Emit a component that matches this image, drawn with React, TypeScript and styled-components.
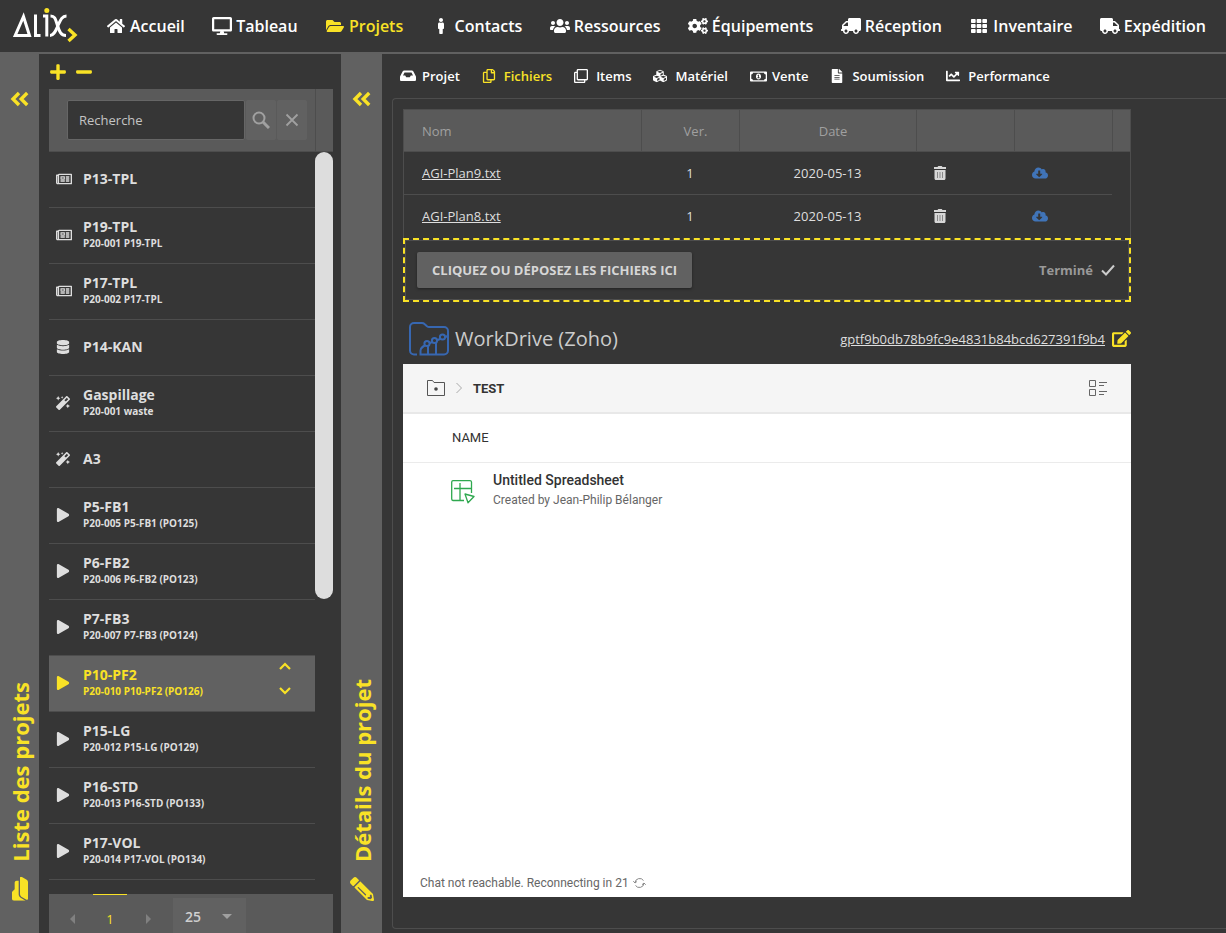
import React from 'react';
import styled, { createGlobalStyle, css } from 'styled-components';
import {
  FaHome, FaDesktop, FaFolderOpen, FaMale, FaUsers, FaCogs, FaTruck, FaTh, FaCubes, FaFileAlt,
  FaChartLine, FaRegCopy, FaRegClone, FaRegMoneyBillAlt, FaPlus, FaMinus, FaRegNewspaper,
  FaDatabase, FaMagic, FaPlay, FaCloudDownloadAlt, FaPencilAlt, FaEdit,
} from 'react-icons/fa';

const c = {
  bg: '#363636',
  bar: '#616161',
  head: '#5a5a5a',
  line: '#4d4d4d',
  text: '#dedede',
  muted: '#a0a0a0',
  accent: '#f9e226',
  blue: '#4074b8',
};

const GlobalStyle = createGlobalStyle`
  * { box-sizing: border-box; }
  html, body, #root { height: 100%; }
  body {
    margin: 0;
    background: ${c.bg};
    color: ${c.text};
    font-family: "Open Sans", "Noto Sans", sans-serif;
    font-size: 13px;
    overflow: hidden;
  }
  button, input, select { font: inherit; color: inherit; }
  button { background: none; border: 0; padding: 0; cursor: pointer; }
  a { color: inherit; }
  svg { display: block; flex: none; }
`;

const Shell = styled.div`
  display: flex;
  flex-direction: column;
  height: 100vh;
`;

const Header = styled.header`
  display: flex;
  align-items: center;
  height: 54px;
  flex: none;
  padding: 0 20px 0 12px;
  border-bottom: 2px solid ${c.bar};
`;

const MainNav = styled.nav`
  flex: 1;
  display: flex;
  justify-content: space-between;
  margin-left: 26px;
`;

const NavLink = styled.a<{ $active?: boolean }>`
  display: flex;
  align-items: center;
  gap: 2px;
  color: ${p => (p.$active ? c.accent : '#fff')};
  font-size: 16px;
  font-weight: 600;
  line-height: 24px;
  text-decoration: none;
`;

const NavIcon = styled.span<{ $flip?: boolean }>`
  display: flex;
  justify-content: center;
  width: 24px;
  ${p => p.$flip && css`transform: scaleX(-1);`}
`;

const Body = styled.div`
  flex: 1;
  min-height: 0;
  display: flex;
`;

const Rail = styled.aside<{ $width: number }>`
  flex: none;
  width: ${p => p.$width}px;
  display: flex;
  flex-direction: column;
  align-items: center;
  justify-content: space-between;
  padding: 37px 0 32px;
  background: ${c.bar};
  color: ${c.accent};
`;

const RailTitle = styled.h2`
  display: flex;
  align-items: center;
  gap: 15px;
  margin: 0;
  font-size: 22px;
  font-weight: 700;
  line-height: 30px;
  writing-mode: vertical-rl;
  transform: rotate(180deg);
  svg { transform: rotate(90deg); }
`;

const ListPanel = styled.section`
  flex: none;
  width: 302px;
  display: flex;
  flex-direction: column;
  padding: 0 8px 0 10px;
`;

const ListActions = styled.div`
  flex: none;
  display: flex;
  align-items: center;
  gap: 8px;
  height: 35px;
  color: ${c.accent};
`;

const SearchBar = styled.form`
  flex: none;
  display: flex;
  gap: 1px;
  height: 63px;
  margin: 0;
  padding: 11px 0 0 18px;
  background: ${c.head};
  border-bottom: 1px solid ${c.line};
`;

const SearchInput = styled.input`
  width: 178px;
  height: 40px;
  padding: 0 11px;
  background: ${c.bg};
  border: 1px solid #666;
  border-radius: 2px;
  outline: 0;
  &::placeholder { color: #c4c4c4; opacity: 1; }
`;

const SearchButton = styled.button`
  display: flex;
  align-items: center;
  justify-content: center;
  width: 30px;
  height: 40px;
  background: ${c.bar};
  border-radius: 2px;
  color: ${c.muted};
`;

const SearchEnd = styled.span`
  width: 18px;
  height: 62px;
  margin: -11px 0 0 auto;
  border-left: 1px solid ${c.line};
`;

const ListArea = styled.div`
  flex: 1;
  min-height: 0;
  display: flex;
`;

const ProjectList = styled.ul`
  flex: 1;
  margin: 0;
  padding: 0;
  overflow: hidden;
  list-style: none;
`;

const Scroller = styled.div`
  width: 18px;
`;

const Thumb = styled.div`
  height: 60.3%;
  border-radius: 9px;
  background: #ddd;
`;

const Row = styled.li<{ $selected?: boolean }>`
  display: flex;
  align-items: center;
  height: 56px;
  padding: 0 24px 1px 7px;
  border-bottom: 1px solid ${c.line};
  color: ${c.text};
  font-weight: 700;
  line-height: 16px;
  ${p => p.$selected && css`
    background: ${c.bar};
    color: ${c.accent};
  `}
`;

const RowIcon = styled.span`
  width: 27px;
  font-size: 14px;
`;

const RowText = styled.div`
  flex: 1;
  font-size: 14px;
`;

const RowDetail = styled.div`
  font-size: 10px;
`;

const MoveButtons = styled.div`
  display: flex;
  flex-direction: column;
  gap: 17px;
  padding-bottom: 9px;
  button { display: block; }
`;

const Pager = styled.footer`
  flex: none;
  display: flex;
  align-items: flex-start;
  height: 39px;
  padding-left: 2px;
  background: ${c.head};
  overflow: hidden;
`;

const PageButton = styled.button<{ $current?: boolean }>`
  display: flex;
  align-items: center;
  justify-content: center;
  width: ${p => (p.$current ? 34 : 42)}px;
  height: 48px;
  border-top: 1px solid ${p => (p.$current ? c.accent : 'transparent')};
  color: ${p => (p.$current ? c.accent : '#808080')};
`;

const PageSize = styled.label`
  display: flex;
  align-items: center;
  width: 73px;
  height: 36px;
  margin: 4px 0 0 4px;
  padding-right: 14px;
  background: ${c.bar};
  color: ${c.muted};
`;

const PageSelect = styled.select`
  flex: 1;
  width: 40px;
  height: 36px;
  padding: 0 0 0 12px;
  appearance: none;
  background: transparent;
  border: 0;
  outline: 0;
  color: #d0d0d0;
  font-size: 14px;
  font-weight: 600;
`;

const Details = styled.main`
  flex: 1;
  min-width: 0;
  display: flex;
  flex-direction: column;
  padding: 0 0 4px 10px;
`;

const Tabs = styled.nav`
  flex: none;
  display: flex;
  align-items: center;
  gap: 22px;
  height: 44px;
  padding-left: 8px;
`;

const Tab = styled.a<{ $active?: boolean }>`
  display: flex;
  align-items: center;
  color: ${p => (p.$active ? c.accent : '#fff')};
  font-weight: 600;
  line-height: 20px;
  text-decoration: none;
`;

const TabIcon = styled.span`
  display: flex;
  width: 22px;
  font-size: 14px;
`;

const Pane = styled.div`
  flex: 1;
  min-height: 0;
  display: flex;
  padding: 10px 10px 31px;
  border: 1px solid ${c.line};
  border-right: 0;
  border-radius: 4px 0 0 4px;
`;

const PaneContent = styled.div`
  flex: 1;
  max-width: 728px;
  min-width: 0;
  display: flex;
  flex-direction: column;
`;

const FileTable = styled.table`
  flex: none;
  width: 100%;
  table-layout: fixed;
  border-collapse: separate;
  border-spacing: 0;
  border: 1px solid ${c.line};
  border-bottom: 0;
`;

const Th = styled.th<{ $left?: boolean }>`
  height: 42px;
  padding: 0 0 0 ${p => (p.$left ? 18 : 10)}px;
  background: ${c.head};
  border-bottom: 1px solid ${c.line};
  color: ${c.muted};
  font-weight: 400;
  text-align: ${p => (p.$left ? 'left' : 'center')};
  & + & { border-left: 1px solid ${c.line}; }
`;

const Td = styled.td<{ $center?: boolean; $blank?: boolean }>`
  height: 43px;
  padding: 0 0 0 ${p => (p.$center ? 0 : 18)}px;
  border-bottom: ${p => (p.$blank ? '0' : `1px solid ${c.line}`)};
  text-align: ${p => (p.$center ? 'center' : 'left')};
  button { display: block; }
  tr:last-child > & { border-bottom-color: transparent; }
`;

const DropZone = styled.div`
  flex: none;
  display: flex;
  align-items: center;
  justify-content: space-between;
  height: 64px;
  padding: 0 14px 0 12px;
  border: 2px dashed ${c.accent};
  box-shadow: inset 0 0 0 1px ${c.line};
`;

const UploadButton = styled.button`
  height: 36px;
  padding: 0 15px;
  background: ${c.bar};
  border-radius: 2px;
  box-shadow: 0 1px 3px rgba(0, 0, 0, 0.4);
  color: #d6d6d6;
  font-weight: 700;
  text-transform: uppercase;
`;

const Status = styled.span`
  display: flex;
  align-items: center;
  gap: 8px;
  color: #999;
  font-weight: 700;
`;

const DriveHeader = styled.div`
  flex: none;
  display: flex;
  align-items: center;
  height: 62px;
  padding: 11px 0 0 6px;
`;

const DriveTitle = styled.h3`
  flex: 1;
  margin: 0 0 0 6px;
  color: #ccc;
  font-size: 20px;
  font-weight: 400;
  line-height: 28px;
`;

const DriveId = styled.a`
  margin-right: 7px;
`;

const EditButton = styled.button`
  color: ${c.accent};
`;

const Drive = styled.section`
  flex: 1;
  min-height: 0;
  display: flex;
  flex-direction: column;
  background: #fff;
  color: #333;
  font-family: Roboto, sans-serif;
`;

const Crumbs = styled.nav`
  display: flex;
  align-items: center;
  gap: 10px;
  height: 50px;
  padding: 0 24px;
  background: #f5f5f5;
  border-bottom: 2px solid #e8e8e8;
`;

const Crumb = styled.strong`
  flex: 1;
  font-weight: 700;
`;

const ColumnName = styled.div`
  height: 49px;
  padding-left: 49px;
  border-bottom: 1px solid #ebebeb;
  line-height: 48px;
`;

const FileRow = styled.div`
  flex: 1;
  display: flex;
  align-items: flex-start;
  gap: 18px;
  padding: 7px 0 0 48px;
  svg { margin-top: 10px; }
`;

const FileName = styled.div`
  font-size: 14px;
  font-weight: 500;
  line-height: 20px;
`;

const FileMeta = styled.div`
  color: #666;
  font-size: 12px;
  line-height: 20px;
`;

const Connection = styled.div`
  display: flex;
  align-items: center;
  gap: 4px;
  height: 28px;
  padding-left: 17px;
  color: #666;
  font-size: 12px;
`;

const Logo = () => (
  <svg width="66" height="36" viewBox="12 8 66 36" fill="none" stroke="#fff" strokeWidth="3" role="img" aria-label="Alix">
    <path d="M23.5 16.5 15.2 35.5H29.5Z" strokeLinejoin="miter" />
    <path d="M35.5 14.5V35.5H40.5" />
    <path d="M43 16H46.8V36.5" />
    <path d="M50.5 16C55 16 55.5 19 57.5 25.5S61 35.5 66 35.5" />
    <path d="M66.5 16C62 16 60.5 20 58 25.5S54 35.5 50 35.5" />
    <circle cx="46.8" cy="10.6" r="2.5" fill={c.accent} stroke="none" />
    <path d="m68.5 29 6.5 6-6.5 6" stroke={c.accent} strokeWidth="3.4" />
  </svg>
);

const DoubleChevron = () => (
  <svg width="19" height="16" viewBox="0 0 19 16" fill="none" stroke="currentColor" strokeWidth="3.4">
    <path d="M9 2 3 8l6 6M17.2 2l-6 6 6 6" />
  </svg>
);

const Tray = () => (
  <svg width="16" height="12" viewBox="0 0 16 12" fill="currentColor">
    <path fillRule="evenodd" d="M4.2.5h7.6c.7 0 1.2.3 1.6.9L15.7 6c.2.3.3.6.3 1v2.7c0 .8-.6 1.3-1.3 1.3H1.3C.6 11 0 10.500 0 9.700V7c0-.4.1-.7.3-1l2.300-4.600C3 .8 3.500.5 4.200.5ZM4.500 2.500 3 5.500h2.200l1 1.700h3.600l1-1.700H13l-1.500-3Z" />
  </svg>
);

const Search = () => (
  <svg width="18" height="18" viewBox="0 0 18 18" fill="none" stroke="currentColor" strokeWidth="2">
    <circle cx="7" cy="7" r="5.500" />
    <path d="m11 11 6 6" strokeWidth="3" />
  </svg>
);

const Cross = () => (
  <svg width="14" height="14" viewBox="0 0 14 14" fill="none" stroke="currentColor" strokeWidth="1.800">
    <path d="m1.500 1.500 11 11M12.500 1.500l-11 11" />
  </svg>
);

const Arrow = ({ down }: { down?: boolean }) => (
  <svg width="12" height="8" viewBox="0 0 12 8" fill="none" stroke="currentColor" strokeWidth="2.200">
    <path d={down ? 'm1 1 5 5 5-5' : 'm1 7 5-5 5 5'} />
  </svg>
);

const Triangle = ({ d, w, h }: { d: string; w: number; h: number }) => (
  <svg width={w} height={h} viewBox={`0 0 ${w} ${h}`} fill="currentColor"><path d={d} /></svg>
);

const Trash = () => (
  <svg width="12" height="14" viewBox="0 0 12 14" fill="#d8d8d8">
    <path d="M0 1h3.500l.8-1h3.400l.8 1H12v2H0ZM.5 4h11v8.500c0 .9-.6 1.500-1.500 1.500H2c-.9 0-1.500-.6-1.500-1.500Z" />
    <path d="M3.500 6v6M6 6v6M8.500 6v6" stroke="#888" />
  </svg>
);

const Check = () => (
  <svg width="14" height="12" viewBox="0 0 14 12" fill="none" stroke="#ccc" strokeWidth="2">
    <path d="m1 6.500 4 4L13 1.500" />
  </svg>
);

const WorkDriveIcon = () => (
  <svg width="40" height="34" viewBox="0 0 40 34" fill="none" stroke="#3767b1" strokeWidth="2">
    <path d="M8 32.500H5a4 4 0 0 1-4-4V5a4 4 0 0 1 4-4h8c1 0 1.800.3 2.500 1l2.500 2.200c.6.500 1.200.8 2 .8h15a4 4 0 0 1 4 4v19.500a4 4 0 0 1-4 4H11.500v-4c0-3 3-4.500 7-6.500s14-5 20-8" />
    <path d="M19 22v10M27 18.500v13.500" />
    <circle cx="18" cy="21.500" r="2.600" fill={c.bg} />
    <circle cx="25.500" cy="18.500" r="2.600" fill={c.bg} />
    <circle cx="33.500" cy="15" r="2.600" fill={c.bg} />
  </svg>
);

const RootFolder = () => (
  <svg width="18" height="16" viewBox="0 0 18 16" fill="none" stroke="#555">
    <path d="M.5.500h5l1.500 2h10.500v13H.500Z" />
    <circle cx="9" cy="9" r="1.800" fill="#444" stroke="none" />
  </svg>
);

const CrumbArrow = () => (
  <svg width="8" height="12" viewBox="0 0 8 12" fill="none" stroke="#aaa"><path d="m1.500 1 5 5-5 5" /></svg>
);

const ViewMode = () => (
  <svg width="18" height="16" viewBox="0 0 18 16" fill="none" stroke="#666">
    <path d="M.5.500h6v6h-6ZM.5 9.500h6v6h-6ZM10 2.500h8M10 5.500h5M10 11.500h8M10 14.500h5" />
  </svg>
);

const Sheet = () => (
  <svg width="24" height="24" viewBox="0 0 24 24" fill="none" stroke="#2fa84f" strokeWidth="1.300" strokeLinejoin="round">
    <path d="M13 20.500H2A1.500 1.500 0 0 1 .700 19V2A1.500 1.500 0 0 1 2 .700h17A1.500 1.500 0 0 1 20.500 2v11M3 8.500h17M9 3v17" />
    <path d="m14 14 9 2.500-6 6.200Z" fill="#fff" />
  </svg>
);

const Reconnect = () => (
  <svg width="13" height="12" viewBox="0 0 13 12" fill="none" stroke="#888">
    <path d="M2 5.500a4.700 4.700 0 0 1 8.500-2M11 6.500a4.700 4.700 0 0 1-8.500 2M.300 4.200 2 6l1.900-1.500M9 7.700l2-1.700 1.700 1.700" />
  </svg>
);

const navItems = [
  { label: 'Accueil', icon: <FaHome size={18} /> },
  { label: 'Tableau', icon: <FaDesktop size={20} /> },
  { label: 'Projets', icon: <FaFolderOpen size={18} />, active: true },
  { label: 'Contacts', icon: <FaMale size={16} /> },
  { label: 'Ressources', icon: <FaUsers size={20} /> },
  { label: 'Équipements', icon: <FaCogs size={20} /> },
  { label: 'Réception', icon: <FaTruck size={20} />, flip: true },
  { label: 'Inventaire', icon: <FaTh size={16} /> },
  { label: 'Expédition', icon: <FaTruck size={20} /> },
];

const tabs = [
  { label: 'Projet', icon: <Tray /> },
  { label: 'Fichiers', icon: <FaRegCopy />, active: true },
  { label: 'Items', icon: <FaRegClone /> },
  { label: 'Matériel', icon: <FaCubes /> },
  { label: 'Vente', icon: <FaRegMoneyBillAlt size={17} /> },
  { label: 'Soumission', icon: <FaFileAlt /> },
  { label: 'Performance', icon: <FaChartLine /> },
];

const projects = [
  { name: 'P13-TPL', icon: <FaRegNewspaper size={16} /> },
  { name: 'P19-TPL', detail: 'P20-001 P19-TPL', icon: <FaRegNewspaper size={16} /> },
  { name: 'P17-TPL', detail: 'P20-002 P17-TPL', icon: <FaRegNewspaper size={16} /> },
  { name: 'P14-KAN', icon: <FaDatabase /> },
  { name: 'Gaspillage', detail: 'P20-001 waste', icon: <FaMagic /> },
  { name: 'A3', icon: <FaMagic /> },
  { name: 'P5-FB1', detail: 'P20-005 P5-FB1 (PO125)', icon: <FaPlay /> },
  { name: 'P6-FB2', detail: 'P20-006 P6-FB2 (PO123)', icon: <FaPlay /> },
  { name: 'P7-FB3', detail: 'P20-007 P7-FB3 (PO124)', icon: <FaPlay /> },
  { name: 'P10-PF2', detail: 'P20-010 P10-PF2 (PO126)', icon: <FaPlay />, selected: true },
  { name: 'P15-LG', detail: 'P20-012 P15-LG (PO129)', icon: <FaPlay /> },
  { name: 'P16-STD', detail: 'P20-013 P16-STD (PO133)', icon: <FaPlay /> },
  { name: 'P17-VOL', detail: 'P20-014 P17-VOL (PO134)', icon: <FaPlay /> },
];

const files = [
  { name: 'AGI-Plan9.txt', version: 1, date: '2020-05-13' },
  { name: 'AGI-Plan8.txt', version: 1, date: '2020-05-13' },
];

export default function App() {
  return (
    <Shell>
      <GlobalStyle />
      <Header>
        <Logo />
        <MainNav aria-label="Navigation principale">
          {navItems.map(n => (
            <NavLink key={n.label} href="#" $active={n.active}>
              <NavIcon $flip={n.flip}>{n.icon}</NavIcon>
              {n.label}
            </NavLink>
          ))}
        </MainNav>
      </Header>
      <Body>
        <Rail $width={39}>
          <button aria-label="Réduire la liste"><DoubleChevron /></button>
          <RailTitle><FaFolderOpen size={24} />Liste des projets</RailTitle>
        </Rail>
        <ListPanel>
          <ListActions>
            <button aria-label="Ajouter"><FaPlus size={18} /></button>
            <button aria-label="Retirer"><FaMinus size={18} /></button>
          </ListActions>
          <SearchBar onSubmit={e => e.preventDefault()}>
            <SearchInput placeholder="Recherche" aria-label="Recherche" />
            <SearchButton aria-label="Chercher"><Search /></SearchButton>
            <SearchButton type="reset" aria-label="Effacer"><Cross /></SearchButton>
            <SearchEnd />
          </SearchBar>
          <ListArea>
            <ProjectList>
              {projects.map(p => (
                <Row key={p.name} $selected={p.selected}>
                  <RowIcon>{p.icon}</RowIcon>
                  <RowText>
                    {p.name}
                    {p.detail && <RowDetail>{p.detail}</RowDetail>}
                  </RowText>
                  {p.selected && (
                    <MoveButtons>
                      <button aria-label="Monter"><Arrow /></button>
                      <button aria-label="Descendre"><Arrow down /></button>
                    </MoveButtons>
                  )}
                </Row>
              ))}
            </ProjectList>
            <Scroller aria-hidden="true"><Thumb /></Scroller>
          </ListArea>
          <Pager>
            <PageButton aria-label="Page précédente"><Triangle w={5} h={10} d="M5 0v10L0 5Z" /></PageButton>
            <PageButton $current>1</PageButton>
            <PageButton aria-label="Page suivante"><Triangle w={5} h={10} d="M0 0v10l5-5Z" /></PageButton>
            <PageSize>
              <PageSelect aria-label="Lignes par page" defaultValue="25">
                <option>25</option>
                <option>50</option>
              </PageSelect>
              <Triangle w={10} h={5} d="M0 0h10L5 5Z" />
            </PageSize>
          </Pager>
        </ListPanel>
        <Rail $width={41}>
          <button aria-label="Réduire les détails"><DoubleChevron /></button>
          <RailTitle><FaPencilAlt size={24} />Détails du projet</RailTitle>
        </Rail>
        <Details>
          <Tabs aria-label="Sections du projet">
            {tabs.map(t => (
              <Tab key={t.label} href="#" $active={t.active}>
                <TabIcon>{t.icon}</TabIcon>
                {t.label}
              </Tab>
            ))}
          </Tabs>
          <Pane>
            <PaneContent>
              <FileTable>
                <colgroup>
                  <col />
                  <col width="98" />
                  <col width="177" />
                  <col width="98" />
                  <col width="98" />
                  <col width="18" />
                </colgroup>
                <thead>
                  <tr>
                    <Th $left>Nom</Th>
                    <Th>Ver.</Th>
                    <Th>Date</Th>
                    <Th />
                    <Th />
                    <Th />
                  </tr>
                </thead>
                <tbody>
                  {files.map(f => (
                    <tr key={f.name}>
                      <Td><a href="#">{f.name}</a></Td>
                      <Td $center>{f.version}</Td>
                      <Td $center>{f.date}</Td>
                      <Td><button aria-label="Supprimer"><Trash /></button></Td>
                      <Td><button aria-label="Télécharger"><FaCloudDownloadAlt size={16} color={c.blue} /></button></Td>
                      <Td $blank />
                    </tr>
                  ))}
                </tbody>
              </FileTable>
              <DropZone>
                <UploadButton>Cliquez ou déposez les fichiers ici</UploadButton>
                <Status>Terminé<Check /></Status>
              </DropZone>
              <DriveHeader>
                <WorkDriveIcon />
                <DriveTitle>WorkDrive (Zoho)</DriveTitle>
                <DriveId href="#">gptf9b0db78b9fc9e4831b84bcd627391f9b4</DriveId>
                <EditButton aria-label="Modifier"><FaEdit size={19} /></EditButton>
              </DriveHeader>
              <Drive>
                <Crumbs aria-label="Dossier">
                  <RootFolder />
                  <CrumbArrow />
                  <Crumb>TEST</Crumb>
                  <ViewMode />
                </Crumbs>
                <ColumnName>NAME</ColumnName>
                <FileRow>
                  <Sheet />
                  <div>
                    <FileName>Untitled Spreadsheet</FileName>
                    <FileMeta>Created by Jean-Philip Bélanger</FileMeta>
                  </div>
                </FileRow>
                <Connection>Chat not reachable. Reconnecting in 21<Reconnect /></Connection>
              </Drive>
            </PaneContent>
          </Pane>
        </Details>
      </Body>
    </Shell>
  );
}
